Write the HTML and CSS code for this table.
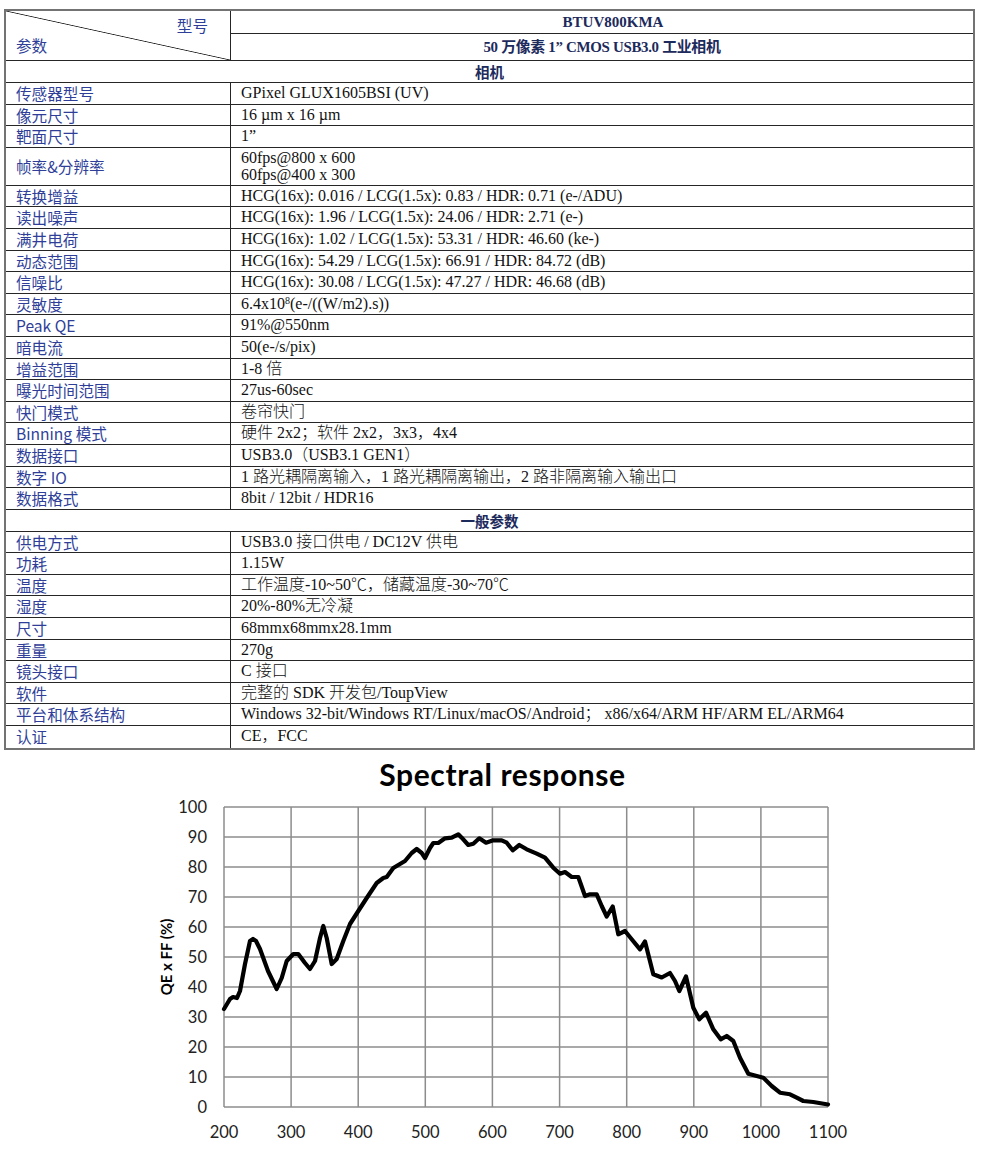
FILE: index.html
```html
<!DOCTYPE html>
<html lang="zh-CN">
<head>
<meta charset="utf-8">
<title>BTUV800KMA</title>
<link rel="stylesheet" href="styles.css">
</head>
<body>
<div class="spec">
  <div class="diag"><span class="diag-top">型号</span><span class="diag-bottom">参数</span></div>
  <div class="model">BTUV800KMA</div>
  <div class="name">50 万像素 1” CMOS USB3.0 工业相机</div>
  <div class="section">相机</div>
  <div class="k">传感器型号</div><div class="v">GPixel GLUX1605BSI (UV)</div>
  <div class="k">像元尺寸</div><div class="v">16 µm x 16 µm</div>
  <div class="k">靶面尺寸</div><div class="v">1”</div>
  <div class="k tall">帧率&amp;分辨率</div><div class="v tall">60fps@800 x 600<br>60fps@400 x 300</div>
  <div class="k">转换增益</div><div class="v">HCG(16x): 0.016 / LCG(1.5x): 0.83 / HDR: 0.71 (e-/ADU)</div>
  <div class="k">读出噪声</div><div class="v">HCG(16x): 1.96 / LCG(1.5x): 24.06 / HDR: 2.71 (e-)</div>
  <div class="k">满井电荷</div><div class="v">HCG(16x): 1.02 / LCG(1.5x): 53.31 / HDR: 46.60 (ke-)</div>
  <div class="k">动态范围</div><div class="v">HCG(16x): 54.29 / LCG(1.5x): 66.91 / HDR: 84.72 (dB)</div>
  <div class="k">信噪比</div><div class="v">HCG(16x): 30.08 / LCG(1.5x): 47.27 / HDR: 46.68 (dB)</div>
  <div class="k">灵敏度</div><div class="v">6.4x10<sup>8</sup>(e-/((W/m2).s))</div>
  <div class="k">Peak QE</div><div class="v">91%@550nm</div>
  <div class="k">暗电流</div><div class="v">50(e-/s/pix)</div>
  <div class="k">增益范围</div><div class="v">1-8 倍</div>
  <div class="k">曝光时间范围</div><div class="v">27us-60sec</div>
  <div class="k">快门模式</div><div class="v">卷帘快门</div>
  <div class="k">Binning 模式</div><div class="v">硬件 2x2；软件 2x2，3x3，4x4</div>
  <div class="k">数据接口</div><div class="v">USB3.0（USB3.1 GEN1）</div>
  <div class="k">数字 IO</div><div class="v">1 路光耦隔离输入，1 路光耦隔离输出，2 路非隔离输入输出口</div>
  <div class="k">数据格式</div><div class="v">8bit / 12bit / HDR16</div>
  <div class="section">一般参数</div>
  <div class="k">供电方式</div><div class="v">USB3.0 接口供电 / DC12V 供电</div>
  <div class="k">功耗</div><div class="v">1.15W</div>
  <div class="k">温度</div><div class="v">工作温度-10~50℃，储藏温度-30~70℃</div>
  <div class="k">湿度</div><div class="v">20%-80%无冷凝</div>
  <div class="k">尺寸</div><div class="v">68mmx68mmx28.1mm</div>
  <div class="k">重量</div><div class="v">270g</div>
  <div class="k">镜头接口</div><div class="v">C 接口</div>
  <div class="k">软件</div><div class="v">完整的 SDK 开发包/ToupView</div>
  <div class="k">平台和体系结构</div><div class="v">Windows 32-bit/Windows RT/Linux/macOS/Android；&nbsp;x86/x64/ARM HF/ARM EL/ARM64</div>
  <div class="k">认证</div><div class="v">CE，FCC</div>
</div>

<div class="chart">
  <h2 class="chart-title">Spectral response</h2>
  <svg class="chart-svg" width="983" height="377" viewBox="0 792 983 377" xmlns="http://www.w3.org/2000/svg">
    <g class="grid" stroke="#8c8c8c" stroke-width="1.5" fill="none">
      <line x1="224" y1="806" x2="828" y2="806"/>
      <line x1="224" y1="836" x2="828" y2="836"/>
      <line x1="224" y1="866" x2="828" y2="866"/>
      <line x1="224" y1="896" x2="828" y2="896"/>
      <line x1="224" y1="926" x2="828" y2="926"/>
      <line x1="224" y1="956" x2="828" y2="956"/>
      <line x1="224" y1="986" x2="828" y2="986"/>
      <line x1="224" y1="1016" x2="828" y2="1016"/>
      <line x1="224" y1="1046" x2="828" y2="1046"/>
      <line x1="224" y1="1076" x2="828" y2="1076"/>
      <line x1="224" y1="1106" x2="828" y2="1106"/>
      <line x1="224" y1="806" x2="224" y2="1106"/>
      <line x1="291.1" y1="806" x2="291.1" y2="1106"/>
      <line x1="358.2" y1="806" x2="358.2" y2="1106"/>
      <line x1="425.3" y1="806" x2="425.3" y2="1106"/>
      <line x1="492.4" y1="806" x2="492.4" y2="1106"/>
      <line x1="559.6" y1="806" x2="559.6" y2="1106"/>
      <line x1="626.7" y1="806" x2="626.7" y2="1106"/>
      <line x1="693.8" y1="806" x2="693.8" y2="1106"/>
      <line x1="760.9" y1="806" x2="760.9" y2="1106"/>
      <line x1="828" y1="806" x2="828" y2="1106"/>
    </g>
    <g class="ytick" text-anchor="end">
      <text x="207" y="812">100</text>
      <text x="207" y="842">90</text>
      <text x="207" y="872">80</text>
      <text x="207" y="902">70</text>
      <text x="207" y="932">60</text>
      <text x="207" y="962">50</text>
      <text x="207" y="992">40</text>
      <text x="207" y="1022">30</text>
      <text x="207" y="1052">20</text>
      <text x="207" y="1082">10</text>
      <text x="207" y="1112">0</text>
    </g>
    <g class="xtick" text-anchor="middle">
      <text x="224" y="1137">200</text>
      <text x="291.1" y="1137">300</text>
      <text x="358.2" y="1137">400</text>
      <text x="425.3" y="1137">500</text>
      <text x="492.4" y="1137">600</text>
      <text x="559.6" y="1137">700</text>
      <text x="626.7" y="1137">800</text>
      <text x="693.8" y="1137">900</text>
      <text x="760.9" y="1137">1000</text>
      <text x="828" y="1137">1100</text>
    </g>
    <text class="yaxis" x="172" y="956" text-anchor="middle" transform="rotate(-90 172 956)">QE x FF (%)</text>
    <polyline class="curve" fill="none" stroke="#000" stroke-width="4.2" stroke-linejoin="round" stroke-linecap="round"
      points="224,1008 230,998 233,996 237,997 240,990 245,963 250,940 253,938 256,940 260,948 268,970 276.7,988 281.7,977 286.7,960 293.3,953 298.3,953 305,962 310,968 315,960 320,937 323.3,925 326.7,937 331.7,963 336.7,958 343.3,940 350,923 358.3,910 366.7,897 376.7,882 383.3,877 386.7,876 393.3,867 405,860 411.7,852 416.7,848 421.7,852 425,857 430,847 433.3,842 438.3,842 445,837.3 451.7,836.7 458.3,833.3 461.7,836.7 468.3,844 473.3,842.7 479.3,837.3 486,841.7 493.3,839.3 501.7,839.3 506.7,841.7 512.7,849.3 519.3,844 526.7,848.3 536.7,852.7 545,856.7 553.3,866.7 560,872.7 565,871 571.7,876 578.3,876 585,895 590,893.3 596.7,893.3 601.7,905 606.7,915.5 612.7,905.5 618.3,933.3 625,930 631.7,938.3 640,948.3 645,940.5 653.3,973.3 661.7,976.5 670,972 675,980 679.3,990 686,975.5 693.3,1006.7 699.3,1018.3 706,1011.7 713.3,1028.3 720.7,1038.3 726.7,1035 733.3,1040 740,1056.7 748.3,1072.7 756.7,1075 763.3,1076.7 771.7,1085 780,1091.7 790,1093.3 796.7,1096.7 803.3,1100 813.3,1101 828,1103.5"/>
  </svg>
</div>
</body>
</html>
```

FILE: styles.css
```css
html, body {
  margin: 0;
  padding: 0;
  background: #fff;
}

body {
  font-family: "Liberation Serif", "Noto Sans CJK SC", serif;
  color: #111;
}

.spec {
  display: grid;
  grid-template-columns: 225px 1fr;
  width: 971px;
  margin: 9px 0 0 4px;
  border: 2px solid #737373;
  box-sizing: border-box;
}

.spec > div {
  border-bottom: 1px solid #262626;
  box-sizing: border-box;
}

.spec > :nth-last-child(-n+2) {
  border-bottom: 0;
}

.diag {
  grid-row: span 2;
  border-right: 1px solid #262626;
  display: flex;
  flex-direction: column;
  padding: 4px 22px 0 10px;
  font-family: "Noto Sans CJK SC", sans-serif;
  font-size: 15.6px;
  line-height: 20px;
  color: #2f3f99;
  background: linear-gradient(to top right, transparent calc(50% - 0.8px), #222 50%, transparent calc(50% + 0.8px));
}

.diag-top {
  align-self: flex-end;
}

.model {
  height: 23px;
  line-height: 22px;
  text-align: center;
  padding-left: 22px;
  font-weight: 700;
  font-size: 15px;
  color: #1c2a5c;
}

.name {
  height: 27px;
  line-height: 26px;
  text-align: center;
  font-weight: 700;
  font-size: 14.9px;
  letter-spacing: -0.3px;
  color: #1c2a5c;
}

.section {
  grid-column: 1 / -1;
  height: 22px;
  line-height: 21px;
  text-align: center;
  font-family: "Noto Sans CJK SC", sans-serif;
  font-weight: 700;
  font-size: 14.5px;
  color: #1c2a5c;
}

.k, .v {
  height: 21.6px;
  line-height: 20.6px;
  padding-left: 10px;
  white-space: nowrap;
}

.k {
  border-right: 1px solid #262626;
  font-family: "Noto Sans CJK SC", sans-serif;
  font-size: 15.6px;
  font-weight: 400;
  color: #2f3f99;
}

.v {
  font-size: 16px;
  font-weight: 300;
  color: #111;
}

.k.tall, .v.tall {
  height: 38px;
  line-height: 17px;
}

.k.tall {
  display: flex;
  align-items: center;
}

.v.tall {
  padding-top: 1.5px;
}

.v sup {
  font-size: 10px;
  line-height: 0;
  vertical-align: 5px;
}

.chart {
  width: 983px;
}

.chart-title {
  margin: 9.6px 0 0;
  height: 34px;
  line-height: 30px;
  text-align: center;
  padding-left: 22px;
  font-family: Lato, "Liberation Sans", sans-serif;
  font-weight: 700;
  font-size: 30px;
  letter-spacing: 0.6px;
  color: #000;
}

.chart-svg {
  display: block;
}

.ytick text, .xtick text {
  font-family: Lato, "Liberation Sans", sans-serif;
  font-size: 16.5px;
  fill: #222;
}

.yaxis {
  font-family: Lato, "Liberation Sans", sans-serif;
  font-weight: 700;
  font-size: 15px;
  fill: #000;
}
```
